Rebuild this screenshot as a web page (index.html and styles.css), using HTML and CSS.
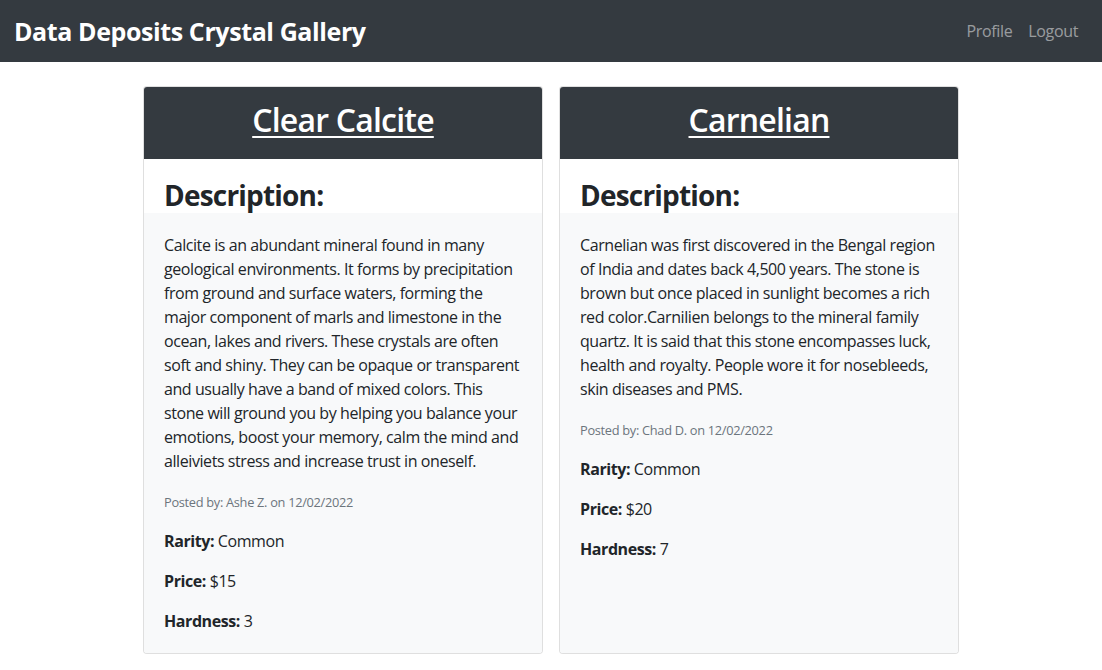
FILE: index.html
```html
<!DOCTYPE html>
<html lang="en">
<head>
<meta charset="utf-8">
<title>Data Deposits Crystal Gallery</title>
<link rel="stylesheet" href="styles.css">
</head>
<body>
<nav class="navbar">
  <a class="brand" href="#">Data Deposits Crystal Gallery</a>
  <div class="nav-links">
    <a class="nav-link" href="#">Profile</a>
    <a class="nav-link" href="#">Logout</a>
  </div>
</nav>
<main class="gallery">
  <article class="card">
    <header class="card-header"><a class="card-title" href="#">Clear Calcite</a></header>
    <div class="card-desc"><h3 class="desc-title">Description:</h3></div>
    <div class="card-body">
      <p>Calcite is an abundant mineral found in many geological environments. It forms by precipitation from ground and surface waters, forming the major component of marls and limestone in the ocean, lakes and rivers. These crystals are often soft and shiny. They can be opaque or transparent and usually have a band of mixed colors. This stone will ground you by helping you balance your emotions, boost your memory, calm the mind and alleiviets stress and increase trust in oneself.</p>
      <p><small class="posted">Posted by: Ashe Z. on 12/02/2022</small></p>
      <p><b>Rarity:</b> Common</p>
      <p><b>Price:</b> $15</p>
      <p><b>Hardness:</b> 3</p>
    </div>
  </article>
  <article class="card">
    <header class="card-header"><a class="card-title" href="#">Carnelian</a></header>
    <div class="card-desc"><h3 class="desc-title">Description:</h3></div>
    <div class="card-body">
      <p>Carnelian was first discovered in the Bengal region of India and dates back 4,500 years. The stone is brown but once placed in sunlight becomes a rich red color.Carnilien belongs to the mineral family quartz. It is said that this stone encompasses luck, health and royalty. People wore it for nosebleeds, skin diseases and PMS.</p>
      <p><small class="posted">Posted by: Chad D. on 12/02/2022</small></p>
      <p><b>Rarity:</b> Common</p>
      <p><b>Price:</b> $20</p>
      <p><b>Hardness:</b> 7</p>
    </div>
  </article>
</main>
</body>
</html>
```
FILE: styles.css
```css
* { box-sizing: border-box; }
body {
  margin: 0;
  font-family: "Open Sans", "Noto Sans", sans-serif;
  font-size: 16px;
  line-height: 1.5;
  letter-spacing: -0.42px;
  color: #212529;
  background: #fff;
}
.navbar {
  height: 62px;
  background: #343a40;
  display: flex;
  align-items: center;
  justify-content: space-between;
  padding: 0 16px 0 14px;
}
.brand {
  color: #fff;
  font-size: 25px;
  font-weight: 700;
  text-decoration: none;
  line-height: 1.2;
  letter-spacing: -0.4px;
}
.nav-links { display: flex; }
.nav-link {
  color: rgba(255,255,255,0.5);
  text-decoration: none;
  padding: 0 8px;
  letter-spacing: -0.35px;
}
.gallery {
  display: flex;
  justify-content: center;
  align-items: stretch;
  gap: 16px;
  padding-top: 24px;
}
.card {
  width: 400px;
  border: 1px solid rgba(0,0,0,0.125);
  border-radius: 4px;
  overflow: hidden;
  display: flex;
  flex-direction: column;
  background: #fff;
}
.card-header {
  background: #343a40;
  height: 72px;
  padding-bottom: 5px;
  display: flex;
  align-items: center;
  justify-content: center;
}
.card-title {
  color: #fff;
  font-size: 32px;
  font-weight: 600;
  text-decoration: underline;
  text-decoration-thickness: 2px;
  text-underline-offset: 4px;
  line-height: 1.2;
  letter-spacing: -0.8px;
}
.card-desc { padding: 20px 20px 0; }
.desc-title {
  margin: 0;
  font-size: 28px;
  font-weight: 700;
  line-height: 1.2;
  letter-spacing: -0.8px;
}
.card-body {
  flex: 1;
  background: #f8f9fa;
  padding: 20px;
}
.card-body p { margin: 0 0 16px; }
.card-body p:last-child { margin-bottom: 0; }
.posted { font-size: 12.8px; color: #6c757d; letter-spacing: -0.3px; }
```
